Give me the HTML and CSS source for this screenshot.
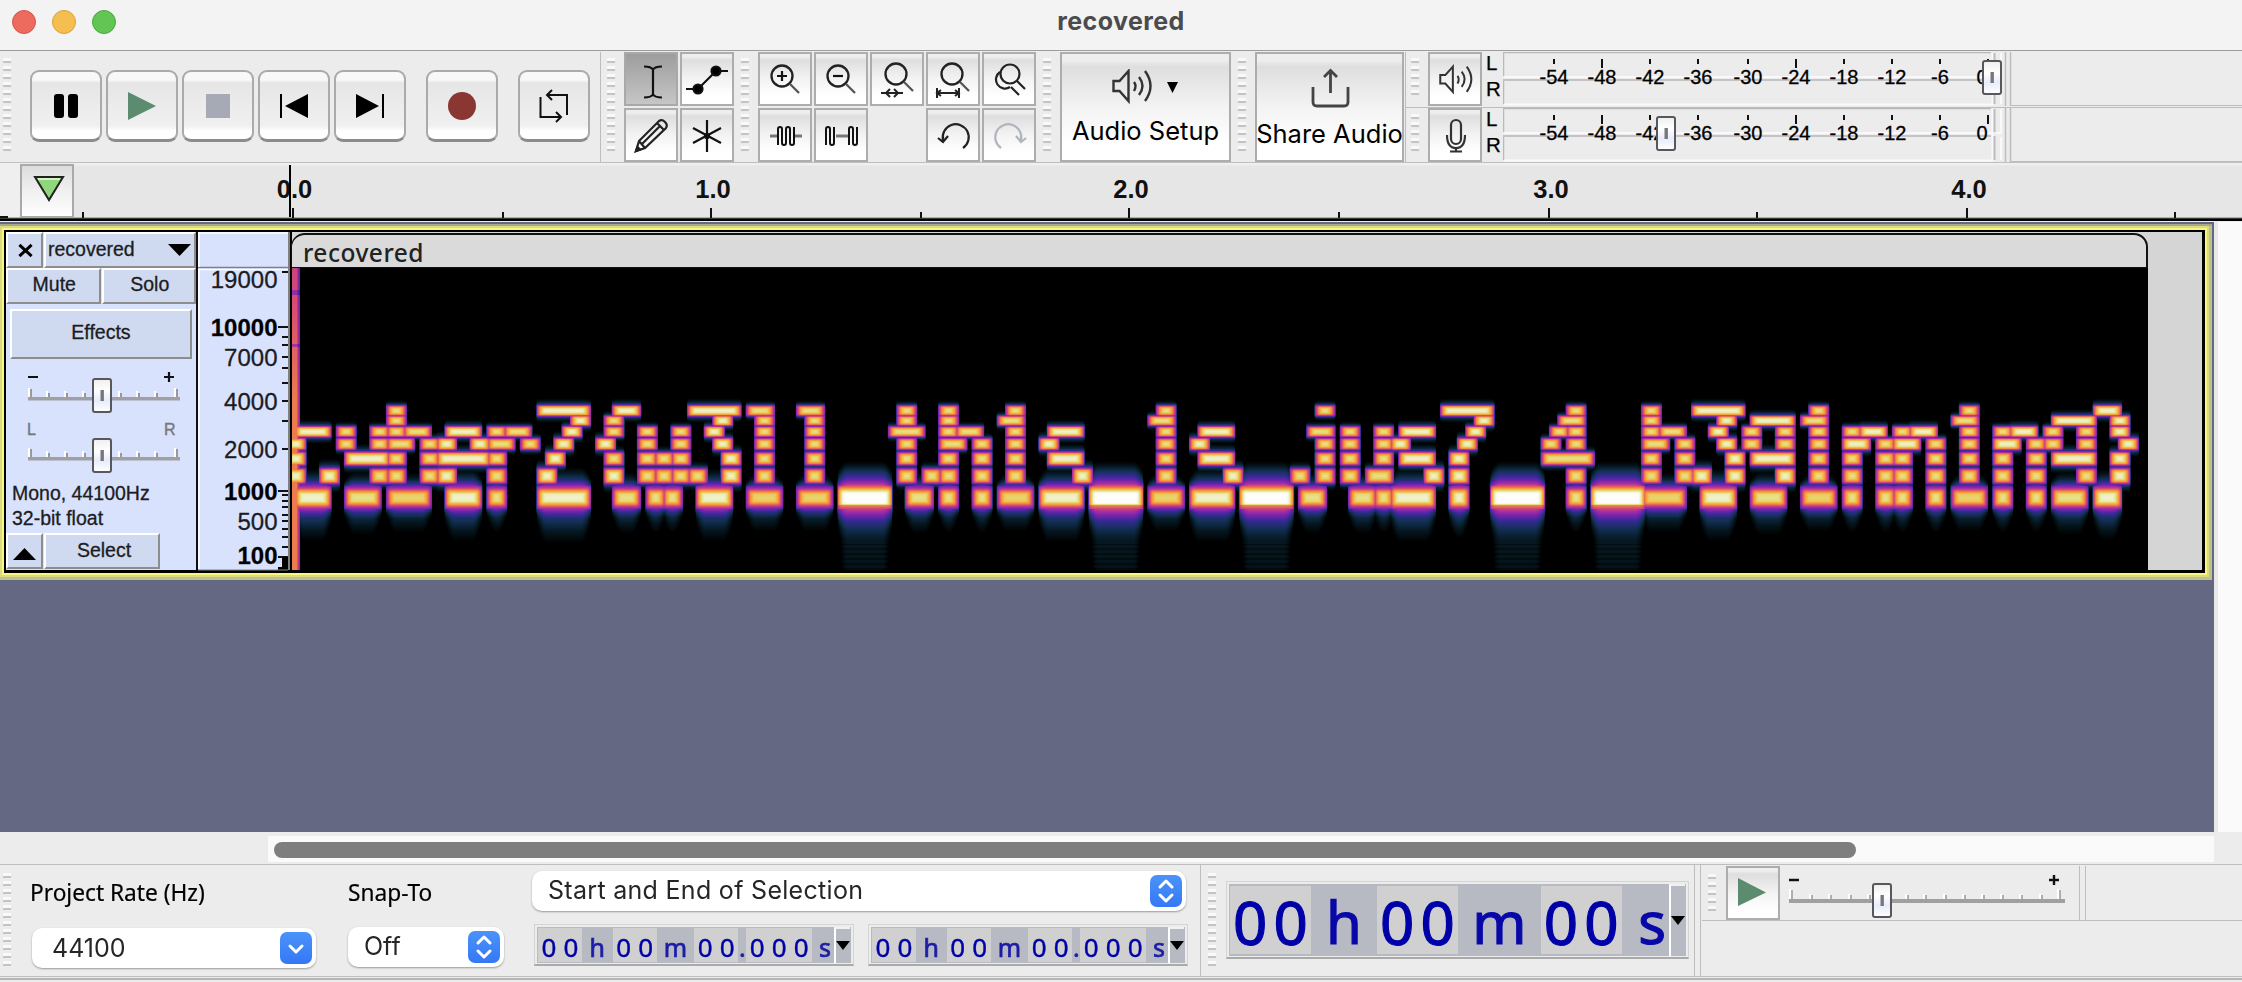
FILE: index.html
```html
<!DOCTYPE html>
<html lang="en">
<head>
<meta charset="utf-8">
<title>recovered</title>
<link rel="stylesheet" href="styles.css">
</head>
<body>
<svg class="defs" width="0" height="0" aria-hidden="true">
  <defs>
    <linearGradient id="thumbFill" x1="0" y1="0" x2="0" y2="1">
      <stop offset="0" stop-color="#eee"/><stop offset=".35" stop-color="#fff"/><stop offset=".65" stop-color="#e6ecfb"/><stop offset="1" stop-color="#fff"/>
    </linearGradient>
    <g id="thumb">
      <rect x="1" y="1" width="18" height="33" rx="2" fill="url(#thumbFill)" stroke="#58585c" stroke-width="2"/>
      <rect x="8.5" y="12" width="3.4" height="11" fill="#77777c"/>
    </g>
    <g id="speaker" fill="none" stroke="#333" stroke-width="2.4">
      <path d="M1.500 12h6l9-10v30l-9-10h-6z"/>
      <path d="M22 13q3 4 0 9M27 8q7 9 0 18M33 2q11 15 0 30"/>
    </g>
    <g id="trackScale">
      <path d="M0 21h152v3.500H0z" fill="#a0a0a4"/>
      <path d="M1 12v9M19 15v6M37 15v6M55 15v6M91 15v6M109 15v6M127 15v6M147 12v9" stroke="#fff" stroke-width="2"/>
      <path d="M3 13v8M21 17v4M39 17v4M57 17v4M93 17v4M111 17v4M129 17v4M149 13v8" stroke="#999" stroke-width="2"/>
    </g>
    <g id="lens" fill="none" stroke="#222" stroke-width="2.300">
      <circle cx="24" cy="24" r="10.500"/><path d="M32 32l9 9" stroke="#555"/>
    </g>
    <g id="meterFrame">
      <path d="M0 .5h488M.5 0v24M.5 28v24" stroke="#b9b9bb" fill="none" stroke-width="1.500"/>
      <path d="M1 25h488M1 52.500h488M489.500 1v52" stroke="#f9f9fd" stroke-width="2"/>
      <path d="M0 28h488" stroke="#c4c4c6" stroke-width="2"/>
      <path d="M491.500 1v23M491.500 28v24" stroke="#bbb" stroke-width="2"/>
      <path d="M493 25h6M498 1v23M498 29v23" stroke="#f9f9fd" stroke-width="2"/>
      <path d="M502.500 0v54M507.500 0v54" stroke="#bdbdbd" stroke-width="1.500"/>
      <path d="M508 53.500h231" stroke="#bdbdbd"/>
      <path d="M51 7v5M99 7v9M147 7v5M195 7v5M245 7v5M293 7v9M341 7v5M389 7v5M437 7v5M485 7v9" stroke="#111" stroke-width="2"/>
    </g>
  </defs>
</svg>

<header class="titlebar">
  <i class="light red"></i><i class="light amber"></i><i class="light green"></i>
  <h1>recovered</h1>
</header>

<section class="toolbar">
  <i class="grip"></i>
  <div class="transport">
    <button><svg viewBox="0 0 72 72"><rect x="24" y="24" width="10" height="24" rx="3"/><rect x="38" y="24" width="10" height="24" rx="3"/></svg></button>
    <button><svg viewBox="0 0 72 72"><path d="M22 22l28 14L22 50z" fill="#5c8c70"/></svg></button>
    <button><svg viewBox="0 0 72 72"><path d="M24 24h24v24H24z" fill="#a6aab5"/></svg></button>
    <button><svg viewBox="0 0 72 72"><path d="M22 24h2v24h-2zM50 24v24L27 36z"/></svg></button>
    <button><svg viewBox="0 0 72 72"><path d="M48 24h2v24h-2zM22 24v24l23-12z"/></svg></button>
    <button class="record"><svg viewBox="0 0 72 72"><circle cx="36" cy="36" r="14" fill="#8a3733"/></svg></button>
    <button class="loop"><svg viewBox="0 0 72 72" fill="none" stroke="#111" stroke-width="2"><path d="M22.500 27v20h20M34 20l-5 5 5 5M29 25h20v20M38 42l5 5-5 5"/></svg></button>
  </div>
  <i class="rule r1"></i>
  <i class="grip g2"></i>
  <div class="tools">
    <button class="cell pressed"><svg viewBox="0 0 54 54" fill="none" stroke="#111" stroke-width="2.200"><path d="M20 14.500q7 0 9 3 2-3 9-3M20 45.500q7 0 9-3 2 3 9 3M29 17v27"/></svg></button>
    <button class="cell"><svg viewBox="0 0 54 54" stroke="#111" stroke-width="2.200"><path d="M6 37h12L36 19h12" fill="none"/><circle cx="18" cy="37" r="4.500"/><circle cx="36" cy="19" r="4.500"/></svg></button>
    <button class="cell"><svg viewBox="0 0 54 54" fill="none" stroke="#222" stroke-width="2.200"><path d="M12 43l3-10 20-20q3-2 6 1t1 6L21 40zM15 33l6 7M33 15l7 7M18 36l18-18"/><path d="M12 43l1.500-4 2.500 2.500z" fill="#222"/></svg></button>
    <button class="cell"><svg viewBox="0 0 54 54" fill="none" stroke="#111" stroke-width="2.200"><path d="M27 12v32M13 20l28 15M41 20L13 35"/><circle cx="27" cy="28" r="2" fill="#111"/></svg></button>
  </div>
  <i class="grip g3"></i>
  <div class="edit">
    <button class="cell"><svg viewBox="0 0 54 54"><use href="#lens"/><path d="M19 24h10M24 19v10" stroke="#111" stroke-width="2.200"/></svg></button>
    <button class="cell"><svg viewBox="0 0 54 54"><use href="#lens"/><path d="M19 24h10" stroke="#111" stroke-width="2.200"/></svg></button>
    <button class="cell"><svg viewBox="0 0 54 54"><use href="#lens" x="2" y="-2"/><path d="M11 41h22M20 37l-4 4 4 4M24 37l4 4-4 4" fill="none" stroke="#222" stroke-width="2"/></svg></button>
    <button class="cell"><svg viewBox="0 0 54 54"><use href="#lens" x="2" y="-2"/><path d="M11 41h22M11 36v10M33 36v10M15 38l-4 3 4 3M29 38l4 3-4 3" fill="none" stroke="#222" stroke-width="2"/></svg></button>
    <button class="cell"><svg viewBox="0 0 54 54" fill="none" stroke="#222" stroke-width="2.200"><circle cx="28" cy="22" r="9.500"/><path d="M35 29l8 8M18 20a9 9 0 1 0 10 15M29 35l8 8"/></svg></button>
    <button class="cell"><svg viewBox="0 0 54 54" fill="none" stroke="#111" stroke-width="2"><path d="M12 28h8M37 28h7" stroke="#777" stroke-width="3"/><path d="M20 37V21q0-2 2-2t2 2v14q0 2 2 2t2-2V21q0-2 2-2t2 2v14q0 2 2 2t2-2V19"/></svg></button>
    <button class="cell"><svg viewBox="0 0 54 54" fill="none" stroke="#111" stroke-width="2"><path d="M22 28h12" stroke="#777" stroke-width="3"/><path d="M12 37V21q0-2 2-2t2 2v14q0 2 2 2t2-2V19M35 37V21q0-2 2-2t2 2v14q0 2 2 2t2-2V19"/></svg></button>
    <span></span>
    <button class="cell"><svg viewBox="0 0 54 54" fill="none" stroke="#222" stroke-width="2.200"><path d="M17 32a13 13 0 1 1 20 8M12 30l5 4 5-6M17 26v7"/></svg></button>
    <button class="cell"><svg viewBox="0 0 54 54" fill="none" stroke="#b0b4bd" stroke-width="2.200"><path d="M39 32a13 13 0 1 0-20 8M44 30l-5 4-5-6M39 26v7"/></svg></button>
  </div>
  <i class="grip g4"></i>
  <button class="cell big setup">
    <svg width="67" height="36" viewBox="0 0 67 36"><use href="#speaker"/><path d="M55 13h11L60.500 24z"/></svg>
    <span>Audio Setup</span>
  </button>
  <i class="grip g5"></i>
  <button class="cell big share">
    <svg width="40" height="42" viewBox="0 0 40 42" fill="none" stroke="#444" stroke-width="2.800"><path d="M3 20v15q0 4 4 4h27q4 0 4-4V20M20.500 26V4M14 10l6.500-6.500L27 10"/></svg>
    <span>Share Audio</span>
  </button>
  <div class="meters">
    <div class="meter">
      <i class="grip short"></i>
      <button class="cell"><svg viewBox="0 0 54 54"><use href="#speaker" transform="translate(11 13) scale(.84)"/></svg></button>
      <div class="channels"><span>L</span><span>R</span></div>
      <svg class="scale" width="739" height="54">
        <use href="#meterFrame"/>
        <g class="db"><text x="51" y="31.500">-54</text><text x="99" y="31.500">-48</text><text x="147" y="31.500">-42</text><text x="195" y="31.500">-36</text><text x="245" y="31.500">-30</text><text x="293" y="31.500">-24</text><text x="341" y="31.500">-18</text><text x="389" y="31.500">-12</text><text x="437" y="31.500">-6</text><text x="479" y="31.500">0</text></g>
        <use href="#thumb" x="479" y="8"/>
      </svg>
    </div>
    <div class="meter">
      <i class="grip short"></i>
      <button class="cell"><svg viewBox="0 0 54 54" fill="none" stroke="#333" stroke-width="2.200"><rect x="23" y="12" width="10" height="24" rx="5"/><path d="M19 27q0 13 9 13t9-13M28 40v4M22 43.500h12"/></svg></button>
      <div class="channels"><span>L</span><span>R</span></div>
      <svg class="scale" width="739" height="54">
        <use href="#meterFrame"/>
        <g class="db"><text x="51" y="31.500">-54</text><text x="99" y="31.500">-48</text><text x="147" y="31.500">-42</text><text x="195" y="31.500">-36</text><text x="245" y="31.500">-30</text><text x="293" y="31.500">-24</text><text x="341" y="31.500">-18</text><text x="389" y="31.500">-12</text><text x="437" y="31.500">-6</text><text x="479" y="31.500">0</text></g>
        <use href="#thumb" x="153" y="8"/>
      </svg>
    </div>
  </div>
</section>

<section class="timeline">
  <svg width="2242" height="58">
    <path d="M74 2.500h2168v53H74z" fill="#e6e6e6"/>
    <path d="M0 55.500h2242" stroke="#777" stroke-width="2"/>
    <path d="M0 57h2242" stroke="#000" stroke-width="3"/>
    <path d="M0 54h8" stroke="#111" stroke-width="2"/>
    <path d="M293 45v10M711 45v10M1129 45v10M1549 45v10M1967 45v10M83 49v6M503 49v6M921 49v6M1339 49v6M1757 49v6M2175 49v6" stroke="#111" stroke-width="2"/>
    <g class="seconds"><text x="294.500" y="35">0.0</text><text x="713" y="35">1.0</text><text x="1131" y="35">2.0</text><text x="1551" y="35">3.0</text><text x="1969" y="35">4.0</text></g>
    <path d="M290 2v52" stroke="#000" stroke-width="2"/>
    <linearGradient id="pin" x1="0" y1="0" x2="0" y2="1"><stop offset="0" stop-color="#dcdcdc"/><stop offset=".5" stop-color="#f0f0f0"/><stop offset="1" stop-color="#fff"/></linearGradient>
    <path d="M21 2h52v52H21z" fill="url(#pin)" stroke="#a9a9a9" stroke-width="2"/>
    <path d="M35 14h28L49 37z" fill="#8fd67c" stroke="#222" stroke-width="2"/>
    <path d="M38 16h22" stroke="#d4f5c0" stroke-width="2"/>
  </svg>
</section>

<main class="workspace">
  <div class="pane">
    <div class="track">
      <aside class="panel">
        <div class="row top">
          <button class="flat close"><svg width="17" height="15" viewBox="0 0 18 16"><path d="M2.500 2l13 12M15.500 2l-13 12" stroke="#000" stroke-width="3.200"/></svg></button>
          <button class="flat name"><span>recovered</span><svg width="23" height="12" viewBox="0 0 23 12"><path d="M0 0h23L11.500 12z"/></svg></button>
        </div>
        <div class="row mid"><button class="flat">Mute</button><button class="flat">Solo</button></div>
        <button class="flat effects">Effects</button>
        <svg class="sliders" width="190" height="118">
          <path d="M22 17h10M158 17h10M163 12v10" stroke="#111" stroke-width="2.200"/>
          <use href="#trackScale" x="22" y="16"/><use href="#thumb" x="86" y="18"/>
          <g class="lr"><text x="21" y="75">L</text><text x="158" y="75">R</text></g>
          <use href="#trackScale" x="22" y="76"/><use href="#thumb" x="86" y="78"/>
        </svg>
        <p>Mono, 44100Hz<br>32-bit float</p>
        <div class="row foot">
          <button class="flat up"><svg width="23" height="12" viewBox="0 0 23 12"><path d="M0 12h23L11.500 0z"/></svg></button>
          <button class="flat select">Select</button>
        </div>
      </aside>
      <svg class="freq" width="94" height="340">
        <path d="M0 0h90v338H0z" fill="#d8e2fd"/>
        <path d="M90 0h2v338h-2z" fill="#808080"/><path d="M92 0h2v340h-2z"/>
        <path d="M0 35.500h90" stroke="#808080" stroke-width="1.500"/>
        <path d="M0 1h90M1 0v35M0 37.500h90M1 37v300" stroke="#fff" stroke-width="1.500"/>
        <path d="M84 40h6M84 105h6M84 113h6M84 125h6M84 136h6M84 151h6M84 169h6M84 189h6M84 217h6M84 263h6M84 269h6M84 275h6M84 283h6M84 289h6M84 297h6M84 305h6M84 315h6M80 95h10M80 259h10M80 325h10" stroke="#111" stroke-width="2"/>
        <path d="M84 325h6v14H80v-4h4z"/>
        <path d="M0 338h90" stroke="#808080"/>
        <g class="hz"><text x="79.500" y="56">19000</text><text x="79.500" y="104" class="b">10000</text><text x="79.500" y="134">7000</text><text x="79.500" y="178">4000</text><text x="79.500" y="226">2000</text><text x="79.500" y="268" class="b">1000</text><text x="79.500" y="298">500</text><text x="79.500" y="332" class="b">100</text></g>
      </svg>
      <div class="clip">
        <div class="clip-head">recovered</div>
        <canvas id="spectrum" width="1856" height="302"></canvas>
      </div>
    </div>
  </div>
  <div class="vscroll"></div>
</main>

<div class="hscroll"><div class="lane"><i></i></div></div>

<footer class="bottom">
  <i class="grip"></i>
  <div class="rate"><label>Project Rate (Hz)</label><div class="combo"><span>44100</span><b><svg width="32" height="32"><path d="M10 14l6 6 6-6"/></svg></b></div></div>
  <div class="snap"><label>Snap-To</label><div class="combo"><span>Off</span><b><svg width="32" height="32"><path d="M10 12l6-6 6 6M10 20l6 6 6-6"/></svg></b></div></div>
  <div class="selection">
    <div class="combo"><span>Start and End of Selection</span><b><svg width="32" height="32"><path d="M10 12l6-6 6 6M10 20l6 6 6-6"/></svg></b></div>
    <div class="times">
      <div class="time"><span class="d"><i>0</i><i>0</i></span><span class="u h">h</span><span class="d"><i>0</i><i>0</i></span><span class="u m">m</span><span class="d"><i>0</i><i>0</i></span><span class="u dot">.</span><span class="d"><i>0</i><i>0</i><i>0</i></span><span class="u s">s</span><span class="drop"><svg width="14" height="9" viewBox="0 0 14 9"><path d="M0 0h14L7 9z"/></svg></span></div>
      <div class="time"><span class="d"><i>0</i><i>0</i></span><span class="u h">h</span><span class="d"><i>0</i><i>0</i></span><span class="u m">m</span><span class="d"><i>0</i><i>0</i></span><span class="u dot">.</span><span class="d"><i>0</i><i>0</i><i>0</i></span><span class="u s">s</span><span class="drop"><svg width="14" height="9" viewBox="0 0 14 9"><path d="M0 0h14L7 9z"/></svg></span></div>
    </div>
  </div>
  <i class="rule"></i>
  <i class="grip gt"></i>
  <div class="time large"><span class="d"><i>0</i><i>0</i></span><span class="u h">h</span><span class="d"><i>0</i><i>0</i></span><span class="u m">m</span><span class="d"><i>0</i><i>0</i></span><span class="u s">s</span><span class="drop"><svg width="14" height="9" viewBox="0 0 14 9"><path d="M0 0h14L7 9z"/></svg></span></div>
  <i class="rule ra"></i><i class="rule rb"></i>
  <div class="speed">
    <div class="speed-row">
      <i class="grip short"></i>
      <button class="cell"><svg viewBox="0 0 54 54"><path d="M12 12l28 14.500L12 40z" fill="#5c8c70"/></svg></button>
      <svg class="speed-scale" width="290" height="54">
        <path d="M0 14h10M260 14h10M265 9v10" stroke="#111" stroke-width="2.400"/>
        <path d="M0 33h276v4H0z" fill="#a0a0a0"/>
        <path d="M1 23v10M21 28v5M40 28v5M60 28v5M79 28v5M117 28v5M135 28v5M155 28v5M174 28v5M193 28v5M212 28v5M231 28v5M251 28v5M269 23v10" stroke="#fff" stroke-width="2"/>
        <path d="M3 24v9M23 29v4M42 29v4M62 29v4M81 29v4M119 29v4M137 29v4M157 29v4M176 29v4M195 29v4M214 29v4M233 29v4M253 29v4M271 24v9" stroke="#999" stroke-width="1.500"/>
        <use href="#thumb" x="83" y="17"/>
      </svg>
      <i class="rule"></i><i class="rule rc"></i>
    </div>
  </div>
</footer>
<script src="spectrum.js"></script>
</body>
</html>
```
FILE: styles.css
```css
* { box-sizing: border-box; }
body { margin: 0; width: 2242px; height: 982px; overflow: hidden; background: #ececec; color: #000; font-family: Inter, "Liberation Sans", sans-serif; }
button { padding: 0; border: 0; background: none; font: inherit; color: inherit; }
svg { display: block; }
i { display: block; flex: none; font-style: normal; }
.defs { position: absolute; }

.titlebar { height: 51px; display: flex; align-items: center; gap: 16px; padding: 0 0 7px 12px; background: #f3f3f3; border-bottom: 1px solid #9c9c9c; }
.titlebar h1 { margin: -2px auto 0; padding-right: 132px; font-size: 25px; font-weight: 700; letter-spacing: .4px; color: #4b4b4b; }
.light { width: 24px; height: 24px; border-radius: 50%; border: 1px solid #d3574c; background: #ed6a5f; }
.amber { background: #f5bf4f; border-color: #d9a13c; }
.green { background: #62c554; border-color: #4ca73f; }

.toolbar { height: 112px; display: flex; border-bottom: 1px solid #c0c0c0; padding-top: 1px; }
.grip { width: 8px; height: 94px; margin: 6px 0 0 3px; background: repeating-linear-gradient(#f9f9fc 0 3px, #c3c3c3 3px 5px, #ececec 5px 8px); }
.grip.short { height: 40px; }
.rule { width: 1px; align-self: stretch; background: #bdbdbd; }
.transport { display: flex; gap: 4px; margin: 18px 0 0 19px; }
.transport button { width: 72px; height: 72px; border-radius: 9px; border: 2px solid #aaa; border-bottom: 3px solid #8b8b8b; background: linear-gradient(#f8f8f8 0 12%, #e6e6e6 16%, #f0f0f0 80%, #fff 88%); }
.transport svg { width: 72px; height: 72px; margin: -2px; }
.transport .record, .transport .loop { margin-left: 16px; }
.r1 { margin-left: 10px; }
.g2 { margin-left: 6px; }
.tools, .edit { display: grid; grid-auto-rows: 54px; gap: 2px; align-content: start; }
.tools { grid-template-columns: 54px 54px; margin-left: 9px; }
.g3 { margin-left: 7px; }
.edit { grid-template-columns: repeat(5, 54px); margin-left: 9px; }
.cell { width: 54px; height: 54px; border: 2px solid #adadad; background: linear-gradient(#eee 0 6%, #dedede 12%, #f3f3f3 50%, #fff 85%); }
.cell > svg { margin: -2px; }
.cell.pressed { border-color: #a9a9a9; background: linear-gradient(#9d9d9d, #c6c6c6); }
.g4 { margin-left: 7px; }
.big { height: 110px; font-size: 25.500px; display: flex; flex-direction: column; align-items: center; white-space: nowrap; }
.big > svg { margin: 0; }
.setup { width: 172px; margin-left: 9px; padding-top: 15px; }
.setup span { margin-top: 10px; }
.g5 { margin-left: 7px; }
.share { width: 149px; margin-left: 9px; padding-top: 13px; }
.share > svg { height: 42px; flex: none; }
.share span { margin-top: 9px; }
.meters { display: grid; grid-template-rows: 54px 54px; gap: 2px; margin-left: 1px; border-left: 1px solid #bdbdbd; }
.meter { display: flex; }
.meter + .meter { box-shadow: 0 -1px #bdbdbd; }
.meter .grip { margin-left: 5px; }
.meter .cell { margin-left: 9px; }
.channels { width: 21px; padding: 0 0 0 4px; font: 20.500px/26px "Liberation Sans", sans-serif; display: flex; flex-direction: column; -webkit-text-stroke: .25px; }
.channels span:first-child { margin-top: -2px; }
.db text { font: 20px "Liberation Sans", sans-serif; text-anchor: middle; stroke: #000; stroke-width: .3px; }

.timeline { height: 59px; background: #efefef; }
.seconds text { font: bold 25.500px "Liberation Sans", sans-serif; text-anchor: middle; fill: #111; }

.workspace { height: 610px; display: flex; background: #646883; }
.pane { width: 2212px; height: 358px; padding: 8px 7px 7px 4px; background: #c0c08e; box-shadow: inset 0 2px #646883, inset 0 4px #a9aa8a; }
.track { display: flex; height: 343px; border: solid #000; border-width: 2px 3px 3px 2px; background: #d5d5d5; box-shadow: 0 0 0 2px #f8f880, 0 0 0 4px #dada84; }
.panel { width: 192px; border-right: 2px solid #111; background: #d8e2fd; font: 19.500px "Liberation Sans", sans-serif; color: #1c1c22; -webkit-text-stroke: .3px; }
.row { display: flex; gap: 1px; }
.flat { border: solid #fff; border-width: 2px; border-right-color: #8d8d8d; border-bottom-color: #8d8d8d; background: #cfdaf0; display: flex; align-items: center; justify-content: center; }
.top .flat, .mid .flat { height: 36px; }
.close { width: 37px; padding-left: 2px; }
.name { width: 152px; padding: 0 3px 2px 2px; }
.name svg { margin-top: 2px; }
.top .name { justify-content: space-between; }
.mid .flat { flex: 1; padding: 0 0 3px 2px; }
.effects { width: 182px; height: 50px; margin: 5px 0 0 4px; padding-bottom: 3px; }
.sliders { margin-top: 1px; }
.lr text { font: 16px "Liberation Sans", sans-serif; fill: #77777c; stroke: #77777c; stroke-width: .4px; }
.panel p { margin: 3px 0 0 6px; line-height: 24.500px; white-space: nowrap; }
.foot { margin-top: 3px; }
.foot .flat { height: 36px; }
.up { width: 37px; }
.up svg { margin-top: 6px; }
.select { width: 116px; padding: 0 0 2px 4px; }
.freq { flex: none; }
.hz text { font: 24px "Liberation Sans", sans-serif; text-anchor: end; fill: #1c1c22; stroke: #1c1c22; stroke-width: .3px; }
.hz .b { font-weight: bold; fill: #000; }
.clip { width: 1856px; }
.clip-head { height: 35px; margin: 1px 0 0 -1px; padding: 3px 0 0 11px; border: 2px solid #111; border-width: 2px 2px 1px 1px; border-radius: 14px 14px 0 0; background: #dadada; font: 500 24.500px/29px "Noto Sans", sans-serif; letter-spacing: .5px; color: #222; }
.clip canvas { display: block; }
.vscroll { width: 28px; margin-left: 2px; background: #fafafa; border-left: 4px solid #e9e9e9; }

.hscroll { height: 33px; padding: 4px 28px 2px 268px; border-bottom: 1px solid #bebebe; }
.lane { height: 26px; padding: 6px 0 0 6px; background: #fafafa; }
.lane i { width: 1582px; height: 16px; border-radius: 8px; background: #7e7e7e; }

.bottom { height: 117px; display: flex; padding-bottom: 5px; background: linear-gradient(#c0c0c0, #c0c0c0) 0 111px / 100% 1px no-repeat, linear-gradient(#b5b5b5, #b5b5b5) 0 113px / 100% 2px no-repeat; }
.bottom > .grip { margin-top: 8px; }
.bottom label { display: block; height: 63px; padding-top: 13px; font: 22.700px/30px "Noto Sans", sans-serif; white-space: nowrap; -webkit-text-stroke: .2px; }
.combo { height: 40px; display: flex; align-items: center; justify-content: space-between; padding: 0 4px 0 21px; border-radius: 10px; background: #fff; box-shadow: 0 1px 2px #999; font-size: 25px; color: #262626; }
.combo b { width: 32px; height: 32px; border-radius: 7px; background: linear-gradient(#4b93f9, #3478f6); }
.combo path { fill: none; stroke: #fff; stroke-width: 3px; stroke-linecap: round; stroke-linejoin: round; }
.rate { width: 284px; margin-left: 21px; }
.rate .combo { padding-left: 20px; }
.rate label { margin-left: -2px; }
.snap { width: 156px; margin-left: 32px; }
.snap label { height: 62px; }
.snap .combo, .selection .combo { padding-left: 16px; }
.snap span, .selection .combo span { margin-top: -3px; }
.selection { width: 656px; margin-left: 28px; padding-top: 6px; }
.selection .combo { width: 654px; letter-spacing: .3px; }
.times { display: flex; gap: 14px; margin: 13px 0 0 2px; }
.time { width: 320px; height: 42px; display: flex; align-items: center; padding: 2px 3px; border: 1px solid #d4d4d4; border-bottom: 2px solid #aaa; background: linear-gradient(#b7bac3, #b7bac3) 2px 2px / 314px 36px no-repeat; font: 26px/38px "Noto Sans", sans-serif; color: #0000a8; }
.d { display: flex; height: 34px; background: #d0d0d0; -webkit-text-stroke: .4px; }
.d i { width: 22px; text-align: center; }
.u { height: 34px; text-align: center; color: #1c1ca6; font-size: 25px; -webkit-text-stroke: .7px; }
.h { width: 31px; } .m { width: 38px; } .dot { width: 8px; } .s { width: 20px; text-align: right; padding-right: 1px; }
.drop { height: 36px; width: 16px; margin-left: 2px; padding-top: 12px; border-left: 2px solid #fff; border-top: 2px solid #f0f0f5; }
.selection + .rule { margin-left: 12px; height: 111px; }
.bottom > .gt { margin-left: 7px; }
.large { width: 463px; height: 78px; margin: 16px 0 0 10px; font-size: 60px; line-height: 72px; background-size: 457px 72px; }
.large .d, .large .u { height: 68px; }
.large .d, .large .u { -webkit-text-stroke: 1.200px; }
.large .u { font-size: 58px; color: #0808a8; }
.large .d i { width: 40.500px; }
.large .h { width: 67px; } .large .m { width: 84px; } .large .s { width: 46px; }
.large .drop { height: 72px; padding-top: 30px; }
.ra { margin-left: 5px; height: 111px; } .rb { margin-left: 5px; height: 111px; }
.speed { flex: 1; margin-left: 1px; }
.speed-row { display: flex; height: 56px; padding-top: 1px; border-bottom: 1px solid #bdbdbd; }
.speed .grip { margin: 8px 0 0 6px; }
.speed .cell { margin-left: 10px; }
.speed-scale { margin-left: 9px; }
.rc { margin-left: 5px; }
```
FILE: spectrum.js
```javascript
// Tone map of the clip. Every entry is a first and last column plus a level:
// l, m, h and w run from quiet to loud.
const rows = [
  { y: 142.7, h: 4, tones: "12m 30-34h 39-40h 48-52h 55-56m 61-62m 73m 78m 86m 104m 123m 138-142h 153m 162m 168-172h 182m 200m 216-217h" },
  { y: 152.7, h: 3.8, tones: "12m 34h 38m 51h 56m 62m 73m 78m 85-86m 103-104m 142h 152-153m 162m 171h 175-178h 181-182m 199-200m 211-214h 218h" },
  { y: 163.7, h: 4, tones: "1-3h 6m 10m 12m 14-15m 19-21h 24m 26-27m 33h 38m 42m 46m 50h 56m 62m 72-74m 78m 80-81m 86m 91-93h 104m 109-111h 122-123m 126m 130m 133-135h 141h 151m 153m 162m 164-165m 170h 174m 178m 182m 186m 188-189h 192m 194-195h 200m 204m 206-207h 210m 214m 218h" },
  { y: 176, h: 4.4, tones: "0h 6m 10m 12-13m 16m 18h 22h 24-25m 28m 32h 37h 42m 46m 51h 56m 62m 73m 78-79m 82m 86m 90h 104m 108h 123m 126m 130m 132h 140h 150m 153m 162-163m 166m 171h 174m 178m 182m 186-187h 190m 192-193h 196m 200m 204-205h 208m 210m 214m 219h" },
  { y: 190.7, h: 5, tones: "0h 7-10h 12m 16m 18-22h 24m 31h 38m 42m 44m 46m 52h 56m 62m 73m 78m 82m 86m 91-93h 104m 109-111h 123m 126m 130m 133-135h 139h 150-154m 162m 166m 172h 175-178h 182m 186m 190m 192m 196m 200m 204m 208m 211-214h 218h" },
  { y: 208, h: 5.7, tones: "0h 4h 10m 12m 16m 18h 24m 30h 38h 42m 44m 46m 48m 52h 56m 62m 73m 76m 78m 82m 86m 94h 104m 112h 120m 123m 126m 129-130m 136h 139h 153m 162m 166m 168h 172h 178h 182m 186m 190m 192m 196m 200m 204m 208m 214m 218h" },
  { y: 229.7, h: 7, base: true, tones: "1-3h 7-9m 12-15l 19-21h 24m 30-34h 39-40m 43m 45m 49-51h 55-57l 61-63l 66-70w 74-75m 78m 82m 85-87l 90-93h 96-100w 103-105l 108-111h 114-118w 121-122m 127-128m 130m 132-135h 139h 144-148w 153m 156-160w 162-165l 169-171h 175-177m 181-183l 186m 190m 192m 196m 199-201l 204m 208m 211-213m 216-217h" }
];
const levels = { l: 0.83, m: 0.86, h: 0.92, w: 1.05 };
const PITCH = 8.3667, ORIGIN = 3.5;

const stops = [
  [0, 0, 0, 0], [0.1, 5, 22, 30], [0.2, 18, 48, 84], [0.3, 54, 42, 150], [0.4, 116, 36, 172],
  [0.5, 166, 46, 162], [0.6, 216, 78, 110], [0.7, 246, 142, 60], [0.77, 244, 178, 66],
  [0.84, 230, 218, 116], [0.92, 240, 242, 208], [1, 255, 252, 252], [2, 255, 252, 252]
];
const curve = (points, t) => {
  for (let i = 1; i < points.length; i++) {
    if (t <= points[i][0]) {
      const a = points[i - 1], b = points[i], f = (t - a[0]) / (b[0] - a[0]);
      return a.slice(1).map((v, k) => v + (b[k + 1] - v) * f);
    }
  }
  return points[points.length - 1].slice(1);
};
const narrow = [[0, 0], [0.5, 0.04], [1, 0.2], [1.3, 0.4], [1.6, 0.62], [2, 0.75], [3, 0.92], [4, 1.2]];
const above = [[0, 0], [0.5, 0.02], [1, 0.2], [1.4, 0.38], [1.9, 0.55], [2.5, 0.7], [3.5, 0.85], [5, 1.1]];
const below = [[0, 0], [0.5, 0.02], [1, 0.2], [1.5, 0.42], [2.1, 0.58], [2.8, 0.69], [4.2, 0.8], [6, 0.93], [8, 1.1], [20, 1.3]];
const loud = [[0, 0], [0.5, 0.01], [0.9, 0.1], [1.1, 0.36], [1.7, 0.5], [2.5, 0.64], [3.4, 0.76], [4.6, 0.86], [6, 0.94], [10.5, 0.97]];

const canvas = document.getElementById("spectrum");
const ctx = canvas.getContext("2d");
const W = canvas.width, H = canvas.height;
const field = new Float32Array(W * H);

for (const row of rows) {
  for (const tone of row.tones.split(" ")) {
    const [, first, last, level] = tone.match(/^(\d+)(?:-(\d+))?([lmhw])$/);
    const x1 = ORIGIN + first * PITCH, x2 = ORIGIN + (last || first) * PITCH;
    const from = Math.max(0, Math.floor(x1 - 12)), to = Math.min(W - 1, Math.ceil(x2 + 12));
    const stretch = 1 + (x2 - x1) / 250;
    for (let y = 0; y < H; y++) {
      const dy = y + 0.5 - row.y;
      let t = Math.abs(dy) / row.h;
      const tail = row.base && t > 1.6;
      let py;
      if (!row.base) py = curve(narrow, t)[0];
      else if (level === "w" && dy > 0) py = curve(loud, t)[0];
      else {
        if (t > 1) t = 1 + (t - 1) / stretch;
        py = curve(dy < 0 ? above : below, t)[0];
      }
      if (py > 1.06) continue;
      const ripple = level === "w" && dy > 46 && y % 5 < 2 ? 0.035 : 0;
      for (let x = from; x <= to; x++) {
        const d = Math.max(0, x1 - x, x - x2);
        const px = 0.19 * (d / 6.8) ** 2 + (d > 10 ? (d - 10) * 0.35 : 0);
        const loss = tail ? py + px * 0.45 : Math.cbrt(py ** 3 + px ** 3);
        const v = levels[level] - loss - ripple;
        if (v > field[y * W + x]) field[y * W + x] = v;
      }
    }
  }
}

// Click at the very start of the clip.
for (let y = 0; y < H; y++) {
  const strength = 0.57 + 0.1 * Math.min(1, y / 130) - (Math.abs(y - 24) < 3 || Math.abs(y - 77) < 2 ? 0.12 : 0);
  for (let x = 0; x < 8; x++) {
    const v = strength - (x > 4 ? (x - 4) * 0.07 : 0);
    if (v > field[y * W + x]) field[y * W + x] = v;
  }
}

const image = ctx.createImageData(W, H);
for (let i = 0; i < field.length; i++) {
  const [r, g, b] = curve(stops, field[i]);
  image.data.set([r, g, b, 255], i * 4);
}
ctx.putImageData(image, 0, 0);
```
